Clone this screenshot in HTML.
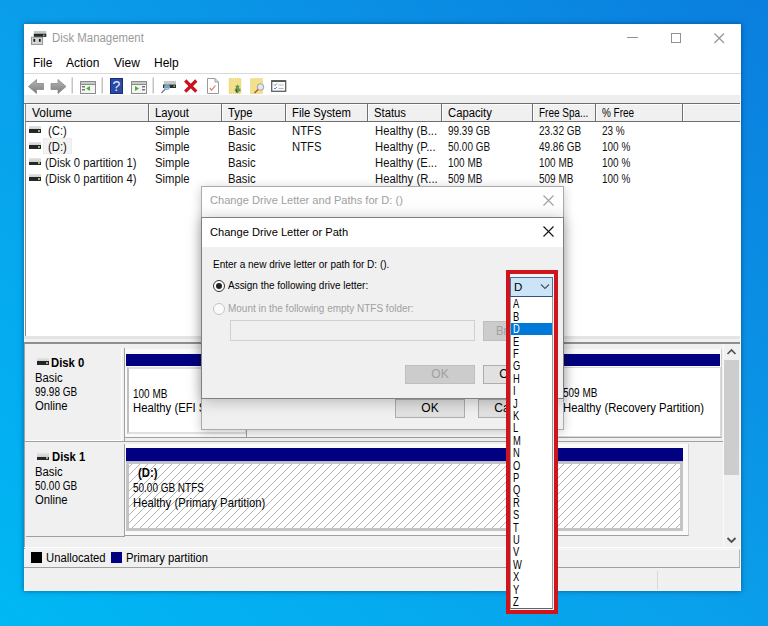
<!DOCTYPE html>
<html><head><meta charset="utf-8">
<style>
*{margin:0;padding:0;box-sizing:border-box}
html,body{width:768px;height:626px;overflow:hidden}
body{position:relative;font-family:"Liberation Sans",sans-serif;font-size:12px;color:#000;
background:linear-gradient(to top right,#00b8f4 0%,#0a9eea 50%,#0a7ede 100%)}
.a{position:absolute;white-space:nowrap;line-height:14px}
.b{position:absolute}
.n{transform:scaleX(.83);transform-origin:0 0}
.t{transform:scaleX(.94);transform-origin:0 0}
#win{position:absolute;left:24px;top:24px;width:717px;height:567px;background:#fff;box-shadow:0 0 5px rgba(0,30,70,.5)}
.row{color:#111}
.hatch{background-color:#fff;background-image:repeating-linear-gradient(-45deg,#fff 0,#fff 5px,#a8a8a8 5px,#a8a8a8 6px)}
.drv{position:absolute;width:12px;height:7px;background:linear-gradient(#e4e4e4 0,#cfcfcf 50%,#222 50%,#2a2a2a 100%)}
.drv::after{content:"";position:absolute;left:9px;top:4px;width:1.5px;height:1.5px;background:#7cc070}
</style></head><body>
<div id="win"></div>

<!-- title bar -->
<svg class="b" style="left:30px;top:30px" width="18" height="16" viewBox="0 0 18 16"><rect x="3.8" y="0.9" width="12.5" height="2.9" fill="#c4c8cc"/><rect x="3.8" y="3.7" width="12.5" height="3.2" fill="#262626"/><rect x="13" y="4.6" width="1.7" height="1.5" fill="#66cc55"/><rect x="1.4" y="7.2" width="11.2" height="7.2" fill="#d6d6d6" stroke="#8a8a8a" stroke-width="0.9"/><rect x="3.4" y="8.9" width="1.8" height="2.9" fill="#1a1a1a"/><rect x="8.9" y="8.9" width="1.8" height="2.9" fill="#1a1a1a"/></svg>
<div class="a" style="left:52px;top:31px;color:#9a9a9a;font-size:12px;transform:scaleX(.95);transform-origin:0 0">Disk Management</div>
<div class="b" style="left:627px;top:37px;width:10.5px;height:1px;background:#929292"></div>
<div class="b" style="left:671px;top:33px;width:9.5px;height:9.5px;border:1px solid #929292"></div>
<svg class="b" style="left:714px;top:32.5px" width="11" height="11" viewBox="0 0 11 11"><path d="M0.5 0.5L10 10M10 0.5L0.5 10" stroke="#929292" stroke-width="1.1"/></svg>

<!-- menu -->
<div class="a" style="left:33px;top:56px">File</div>
<div class="a" style="left:66px;top:56px">Action</div>
<div class="a" style="left:114px;top:56px">View</div>
<div class="a" style="left:154px;top:56px">Help</div>
<div class="b" style="left:24px;top:73px;width:717px;height:1px;background:#dadada"></div>

<!-- toolbar -->
<svg class="b" style="left:24px;top:74px" width="280" height="21" viewBox="0 0 280 21">
 <defs><linearGradient id="ga" x1="0" y1="0" x2="0" y2="1"><stop offset="0" stop-color="#b8b8b8"/><stop offset="1" stop-color="#7a7a7a"/></linearGradient></defs>
 <path d="M4.5 12.5L12.5 5.5V9.5H19.5V15.5H12.5V19.5Z" fill="url(#ga)" stroke="#8a8a8a" stroke-width="0.8"/>
 <path d="M42 12.5L34 5.5V9.5H27V15.5H34V19.5Z" fill="url(#ga)" stroke="#8a8a8a" stroke-width="0.8"/>
 <rect x="47.5" y="3.5" width="1.5" height="16" fill="#c4c4c4"/>
 <rect x="56.5" y="7.5" width="15" height="12" fill="#f4f4f4" stroke="#8c8c8c"/>
 <rect x="56.5" y="7.5" width="15" height="3" fill="#c8c8c8" stroke="#8c8c8c"/>
 <rect x="58" y="12" width="3" height="1.5" fill="#777"/><rect x="58" y="15" width="3" height="1.5" fill="#777"/>
 <path d="M66 12L62 14.5L66 17Z" fill="#4caf3a"/>
 <rect x="77.5" y="3.5" width="1.5" height="16" fill="#c4c4c4"/>
 <rect x="86.5" y="4.5" width="12" height="15" fill="#2a4aa8" stroke="#1a2f70"/>
 <text x="92.5" y="16.8" font-size="14" fill="#e8ecff" text-anchor="middle" font-family="Liberation Sans">?</text>
 <rect x="107.5" y="7.5" width="15" height="12" fill="#f4f4f4" stroke="#8c8c8c"/>
 <rect x="107.5" y="7.5" width="15" height="3" fill="#c8c8c8" stroke="#8c8c8c"/>
 <rect x="118" y="12" width="3" height="1.5" fill="#777"/><rect x="118" y="15" width="3" height="1.5" fill="#777"/>
 <path d="M111 12L115 14.5L111 17Z" fill="#4caf3a"/>
 <rect x="128.5" y="3.5" width="1.5" height="16" fill="#c4c4c4"/>
 <rect x="140" y="7" width="12" height="3.5" fill="#c8c8c8"/><rect x="139" y="10.5" width="13" height="3.5" fill="#2e2e2e"/><rect x="149.5" y="11.5" width="1.5" height="1.5" fill="#66cc66"/>
 <circle cx="143" cy="13" r="2.6" fill="#9cc6e4" fill-opacity=".75" stroke="#7aa8cc" stroke-width="0.9"/><path d="M141.2 15L137.5 19" stroke="#808080" stroke-width="1.3"/>
 <path d="M161.2 6.5L172.3 17.6M172.3 6.5L161.2 17.6" stroke="#c8141c" stroke-width="3.2"/>
 <path d="M183.5 4.5H191L194.5 8V19.5H183.5Z" fill="#fff" stroke="#9a9a9a"/><path d="M191 4.5V8H194.5" fill="none" stroke="#9a9a9a"/>
 <path d="M185.8 13.8L187.6 16.2L191.5 11.5" fill="none" stroke="#e07060" stroke-width="1.1"/>
 <rect x="205" y="4.5" width="12" height="15" fill="#f3e08a"/>
 <rect x="205" y="4.5" width="12" height="15" fill="none" stroke="#e0cc70" stroke-width="0.8" stroke-dasharray="1 1"/>
 <path d="M213.5 10.5L211 13H212V14.5H210.8V17.5H212.5V19H214.5V17.5H216.5V14.5H215V13H216Z" fill="#6a9a50"/><rect x="212" y="15.5" width="1.2" height="1.2" fill="#333"/><rect x="212" y="17.2" width="1.2" height="1.2" fill="#333"/>
 <rect x="226.5" y="4.5" width="12" height="15" fill="#f3e08a"/>
 <rect x="226.5" y="4.5" width="12" height="15" fill="none" stroke="#e0cc70" stroke-width="0.8" stroke-dasharray="1 1"/>
 <circle cx="236.5" cy="13" r="3.3" fill="#e4e8ee" stroke="#9aa0a8" stroke-width="1"/><path d="M234 15.5L230.5 19" stroke="#c04848" stroke-width="1.4"/>
 <rect x="247.7" y="6.7" width="14" height="10.6" fill="#fafafa" stroke="#555" stroke-width="1.2"/><rect x="247.7" y="6.7" width="14" height="1.3" fill="#555"/>
 <path d="M250 10.5L251 11.5L253 9.5M250 14L251 15L253 13" fill="none" stroke="#4a80c0" stroke-width="0.9"/><path d="M254.5 11h5M254.5 14.5h5" stroke="#b0b0b0" stroke-width="0.9"/>
</svg>

<!-- toolbar band -->
<div class="b" style="left:24px;top:95px;width:716px;height:8px;background:#eeeeee"></div>

<!-- list -->
<div class="b" style="left:24px;top:103px;width:716px;height:1px;background:#6e6e6e"></div>
<div class="b" style="left:25px;top:103px;width:1px;height:234px;background:#8a8a8a"></div>
<div class="b" style="left:26px;top:104px;width:714px;height:18px;background:#f0f0f0;border-top:1px solid #fcfcfc;border-bottom:1px solid #6e6e6e"></div>
<div class="b" style="left:148px;top:104px;width:1px;height:17px;background:#707070"></div><div class="b" style="left:149px;top:105px;width:1px;height:16px;background:#fcfcfc"></div>
<div class="b" style="left:221px;top:104px;width:1px;height:17px;background:#707070"></div><div class="b" style="left:222px;top:105px;width:1px;height:16px;background:#fcfcfc"></div>
<div class="b" style="left:285px;top:104px;width:1px;height:17px;background:#707070"></div><div class="b" style="left:286px;top:105px;width:1px;height:16px;background:#fcfcfc"></div>
<div class="b" style="left:367px;top:104px;width:1px;height:17px;background:#707070"></div><div class="b" style="left:368px;top:105px;width:1px;height:16px;background:#fcfcfc"></div>
<div class="b" style="left:441px;top:104px;width:1px;height:17px;background:#707070"></div><div class="b" style="left:442px;top:105px;width:1px;height:16px;background:#fcfcfc"></div>
<div class="b" style="left:532px;top:104px;width:1px;height:17px;background:#707070"></div><div class="b" style="left:533px;top:105px;width:1px;height:16px;background:#fcfcfc"></div>
<div class="b" style="left:595px;top:104px;width:1px;height:17px;background:#707070"></div><div class="b" style="left:596px;top:105px;width:1px;height:16px;background:#fcfcfc"></div>
<div class="b" style="left:682px;top:104px;width:1px;height:17px;background:#707070"></div><div class="b" style="left:683px;top:105px;width:1px;height:16px;background:#fcfcfc"></div>
<div class="a" style="left:32px;top:106px">Volume</div>
<div class="a t" style="left:155px;top:106px">Layout</div>
<div class="a t" style="left:228px;top:106px">Type</div>
<div class="a t" style="left:292px;top:106px">File System</div>
<div class="a t" style="left:374px;top:106px">Status</div>
<div class="a t" style="left:448px;top:106px">Capacity</div>
<div class="a n" style="left:539px;top:106px">Free Spa...</div>
<div class="a n" style="left:602px;top:106px">% Free</div>

<!-- rows -->
<div class="drv" style="left:29px;top:126px"></div>
<div class="drv" style="left:29px;top:142px"></div>
<div class="drv" style="left:29px;top:158px"></div>
<div class="drv" style="left:29px;top:174px"></div>
<div class="b" style="left:43px;top:138px;width:29px;height:16px;background:#f3f3f3;border:1px solid #ececec"></div>
<div class="a t row" style="left:48px;top:124px">(C:)</div>
<div class="a t row" style="left:48px;top:140px">(D:)</div>
<div class="a t row" style="left:45px;top:156px">(Disk 0 partition 1)</div>
<div class="a t row" style="left:45px;top:172px">(Disk 0 partition 4)</div>
<div class="a t row" style="left:155px;top:124px">Simple</div>
<div class="a t row" style="left:155px;top:140px">Simple</div>
<div class="a t row" style="left:155px;top:156px">Simple</div>
<div class="a t row" style="left:155px;top:172px">Simple</div>
<div class="a t row" style="left:228px;top:124px">Basic</div>
<div class="a t row" style="left:228px;top:140px">Basic</div>
<div class="a t row" style="left:228px;top:156px">Basic</div>
<div class="a t row" style="left:228px;top:172px">Basic</div>
<div class="a t row" style="left:292px;top:124px">NTFS</div>
<div class="a t row" style="left:292px;top:140px">NTFS</div>
<div class="a t row" style="left:375px;top:124px">Healthy (B...</div>
<div class="a t row" style="left:375px;top:140px">Healthy (P...</div>
<div class="a t row" style="left:375px;top:156px">Healthy (E...</div>
<div class="a t row" style="left:375px;top:172px">Healthy (R...</div>
<div class="a n row" style="left:448px;top:124px">99.39 GB</div>
<div class="a n row" style="left:448px;top:140px">50.00 GB</div>
<div class="a n row" style="left:448px;top:156px">100 MB</div>
<div class="a n row" style="left:448px;top:172px">509 MB</div>
<div class="a n row" style="left:539px;top:124px">23.32 GB</div>
<div class="a n row" style="left:539px;top:140px">49.86 GB</div>
<div class="a n row" style="left:539px;top:156px">100 MB</div>
<div class="a n row" style="left:539px;top:172px">509 MB</div>
<div class="a n row" style="left:602px;top:124px">23 %</div>
<div class="a n row" style="left:602px;top:140px">100 %</div>
<div class="a n row" style="left:602px;top:156px">100 %</div>
<div class="a n row" style="left:602px;top:172px">100 %</div>

<!-- splitter -->
<div class="b" style="left:24px;top:336px;width:716px;height:3px;background:#e4e4e4"></div>
<div class="b" style="left:24px;top:339px;width:716px;height:3px;background:#f0f0f0"></div>
<div class="b" style="left:24px;top:342px;width:716px;height:2px;background:#8e8e8e"></div>
<div class="b" style="left:24px;top:344px;width:716px;height:205px;background:#f0f0f0"></div>
<div class="b" style="left:24px;top:344px;width:1px;height:205px;background:#a0a0a0"></div>

<!-- disk 0 -->
<div class="b" style="left:26px;top:348px;width:96px;height:93px;background:#f0f0f0;border-right:1px solid #fff;border-bottom:1px solid #fff"></div>
<div class="b" style="left:124px;top:348px;width:1px;height:93px;background:#a0a0a0"></div>
<div class="b" style="left:125px;top:349px;width:597px;height:89px;background:#fafafa;border-right:1px solid #d0d0d0;border-bottom:1px solid #a0a0a0"></div>
<div class="b" style="left:126px;top:354px;width:594px;height:12px;background:#000080"></div>
<div class="b" style="left:127px;top:367px;width:120px;height:67px;background:#fff;border:2px solid #e0e0e0;border-left-color:#c0c0c0"></div>
<div class="b" style="left:246px;top:366px;width:1px;height:71px;background:#a0a0a0"></div>
<div class="b" style="left:555px;top:367px;width:166px;height:70px;background:#fff;border:1px solid #d8d8d8"></div>
<div class="drv" style="left:37px;top:358px"></div>
<div class="a t" style="left:51px;top:356px;font-weight:bold">Disk 0</div>
<div class="a t" style="left:35px;top:371px">Basic</div>
<div class="a n" style="left:35px;top:385px">99.98 GB</div>
<div class="a t" style="left:35px;top:399px">Online</div>
<div class="a n" style="left:133px;top:387px">100 MB</div>
<div class="a t" style="left:133px;top:401px">Healthy (EFI S</div>
<div class="a n" style="left:563px;top:386px">509 MB</div>
<div class="a t" style="left:563px;top:401px">Healthy (Recovery Partition)</div>

<!-- disk 1 -->
<div class="b" style="left:24px;top:441px;width:700px;height:1px;background:#a0a0a0"></div>
<div class="b" style="left:26px;top:444px;width:99px;height:93px;background:#f0f0f0;border-right:1px solid #a0a0a0;border-bottom:1px solid #a0a0a0"></div>
<div class="b" style="left:124px;top:444px;width:1px;height:92px;background:#a0a0a0"></div>
<div class="b" style="left:125px;top:444px;width:564px;height:92px;background:#fafafa;border-right:1px solid #d0d0d0;border-bottom:1px solid #a0a0a0"></div>
<div class="b" style="left:126px;top:448px;width:557px;height:14px;background:#000080"></div>
<div class="b" style="left:126px;top:461px;width:557px;height:1px;background:#b4b8d4"></div>
<svg class="b" style="left:126px;top:462px" width="557" height="69"><defs><pattern id="ht" width="8" height="8" patternUnits="userSpaceOnUse"><rect x="7" y="0" width="1" height="1" fill="#b4b4b4"/><rect x="6" y="1" width="1" height="1" fill="#b0b0b0"/><rect x="5" y="2" width="1" height="1" fill="#b0b0b0"/><rect x="4" y="3" width="1" height="1" fill="#b0b0b0"/><rect x="3" y="4" width="1" height="1" fill="#b0b0b0"/><rect x="2" y="5" width="1" height="1" fill="#b0b0b0"/><rect x="1" y="6" width="1" height="1" fill="#b0b0b0"/><rect x="0" y="7" width="1" height="1" fill="#b0b0b0"/></pattern></defs><rect x="0" y="0" width="557" height="69" fill="#c4c4c4"/><rect x="3" y="2" width="551" height="64" fill="#fff"/><rect x="3" y="2" width="551" height="64" fill="url(#ht)"/></svg>
<div class="drv" style="left:37px;top:453px"></div>
<div class="a t" style="left:52px;top:450px;font-weight:bold">Disk 1</div>
<div class="a t" style="left:35px;top:465px">Basic</div>
<div class="a n" style="left:35px;top:479px">50.00 GB</div>
<div class="a t" style="left:35px;top:493px">Online</div>
<div class="a t" style="left:138px;top:466px;font-weight:bold">(D:)</div>
<div class="a n" style="left:133px;top:481px">50.00 GB NTFS</div>
<div class="a t" style="left:133px;top:496px">Healthy (Primary Partition)</div>

<!-- scrollbar -->
<div class="b" style="left:723px;top:344px;width:16px;height:204px;background:#f0f0f0;border-left:1px solid #fafafa"></div>
<div class="b" style="left:724px;top:360px;width:15px;height:115px;background:#cdcdcd"></div>
<svg class="b" style="left:726px;top:348px" width="11" height="8"><path d="M1.5 6L5.5 2L9.5 6" fill="none" stroke="#505050" stroke-width="1.6"/></svg>
<svg class="b" style="left:726px;top:536px" width="11" height="8"><path d="M1.5 2L5.5 6L9.5 2" fill="none" stroke="#505050" stroke-width="1.8"/></svg>

<!-- legend -->
<div class="b" style="left:24px;top:547px;width:717px;height:1px;background:#fff"></div>
<div class="b" style="left:24px;top:549px;width:716px;height:19px;background:#f0f0f0;border-top:1px solid #f8f8f8;border-bottom:1px solid #a0a0a0;border-right:1px solid #b4b4b4"></div>
<div class="b" style="left:31px;top:552px;width:11px;height:11px;background:#000"></div>
<div class="a t" style="left:46px;top:551px">Unallocated</div>
<div class="b" style="left:111px;top:552px;width:11px;height:11px;background:#000080"></div>
<div class="a t" style="left:126px;top:551px">Primary partition</div>
<!-- status bar -->
<div class="b" style="left:24px;top:568px;width:716px;height:23px;background:#f0f0f0"></div>
<div class="b" style="left:657px;top:571px;width:1px;height:19px;background:#d8d8d8"></div>


<!-- outer dialog -->
<div class="b" style="left:201px;top:186px;width:363px;height:244px;background:#f0f0f0;border:1px solid #aaaaaa;box-shadow:0 2px 10px rgba(0,0,0,.22)"></div>
<div class="b" style="left:202px;top:187px;width:361px;height:31px;background:#fefefe"></div>
<div class="a" style="left:210px;top:193px;color:#a0a0a0;font-size:11.8px;transform:scaleX(.94);transform-origin:0 0">Change Drive Letter and Paths for D: ()</div>
<svg class="b" style="left:543px;top:195px" width="11" height="11" viewBox="0 0 11 11"><path d="M0.5 0.5L10.5 10.5M10.5 0.5L0.5 10.5" stroke="#a0a0a0" stroke-width="1.1"/></svg>
<div class="b" style="left:395px;top:399px;width:70px;height:19px;background:#e1e1e1;border:1px solid #adadad"></div>
<div class="a" style="left:395px;top:401px;width:70px;text-align:center">OK</div>
<div class="b" style="left:478px;top:399px;width:70px;height:19px;background:#e1e1e1;border:1px solid #adadad"></div>
<div class="a" style="left:478px;top:401px;width:70px;text-align:center">Cancel</div>

<!-- inner dialog -->
<div class="b" style="left:201px;top:217px;width:363px;height:182px;background:#f0f0f0;border:1px solid #808080;box-shadow:0 2px 14px rgba(0,0,0,.26)"></div>
<div class="b" style="left:202px;top:218px;width:361px;height:29px;background:#fff"></div>
<div class="a" style="left:210px;top:225px;font-size:11.8px;transform:scaleX(.94);transform-origin:0 0">Change Drive Letter or Path</div>
<svg class="b" style="left:543px;top:226px" width="11" height="11" viewBox="0 0 11 11"><path d="M0.5 0.5L10.5 10.5M10.5 0.5L0.5 10.5" stroke="#111" stroke-width="1.1"/></svg>
<div class="a" style="left:213px;top:257px;font-size:11px;transform:scaleX(.91);transform-origin:0 0">Enter a new drive letter or path for D: ().</div>
<div class="b" style="left:213px;top:280px;width:12px;height:12px;border-radius:50%;border:1px solid #333;background:#fff"></div>
<div class="b" style="left:216px;top:283px;width:6px;height:6px;border-radius:50%;background:#222"></div>
<div class="a" style="left:228px;top:278px;font-size:11px;transform:scaleX(.906);transform-origin:0 0">Assign the following drive letter:</div>
<div class="b" style="left:213px;top:303px;width:12px;height:12px;border-radius:50%;border:1px solid #c4c4c4;background:#fafafa"></div>
<div class="a" style="left:228px;top:301px;font-size:11px;color:#a0a0a0;transform:scaleX(.906);transform-origin:0 0">Mount in the following empty NTFS folder:</div>
<div class="b" style="left:230px;top:320px;width:245px;height:21px;background:#f0f0f0;border:1px solid #d0d0d0"></div>
<div class="b" style="left:483px;top:321px;width:70px;height:20px;background:#cccccc;border:1px solid #bfbfbf"></div>
<div class="a t" style="left:496px;top:324px;color:#a0a0a0">Browse...</div>
<div class="b" style="left:405px;top:365px;width:70px;height:19px;background:#cccccc;border:1px solid #bfbfbf"></div>
<div class="a" style="left:405px;top:367px;width:70px;text-align:center;color:#a0a0a0">OK</div>
<div class="b" style="left:483px;top:365px;width:70px;height:19px;background:#e1e1e1;border:1px solid #adadad"></div>
<div class="a" style="left:483px;top:367px;width:70px;text-align:center">Cancel</div>

<!-- dropdown + red box -->
<div class="b" style="left:506px;top:270px;width:52px;height:344px;border:4.5px solid #d0141b;background:#f4f4f4"></div>
<div class="b" style="left:510px;top:277px;width:43px;height:21px;background:#cce4f7;border:1px solid #4a70a0;border-bottom:2px solid #34507a"></div>
<div class="a" style="left:514px;top:280px;font-size:11.5px">D</div>
<svg class="b" style="left:540px;top:283px" width="10" height="7"><path d="M1 1.5L5 5.5L9 1.5" fill="none" stroke="#505050" stroke-width="1.1"/></svg>
<div class="b" style="left:510px;top:297px;width:43px;height:312px;background:#fff;border:1px solid #9a9a9a;border-bottom-color:#646464;border-top:none"></div>
<div class="b" style="left:511px;top:323px;width:41px;height:12px;background:#0078d7"></div>
<div id="letters" class="b" style="left:513.3px;top:298.3px;font-size:12px;line-height:12.4px;transform:scaleX(.78);transform-origin:0 0">A<br>B<br><span style="color:#fff">D</span><br>E<br>F<br>G<br>H<br>I<br>J<br>K<br>L<br>M<br>N<br>O<br>P<br>Q<br>R<br>S<br>T<br>U<br>V<br>W<br>X<br>Y<br>Z</div>
</body></html>
